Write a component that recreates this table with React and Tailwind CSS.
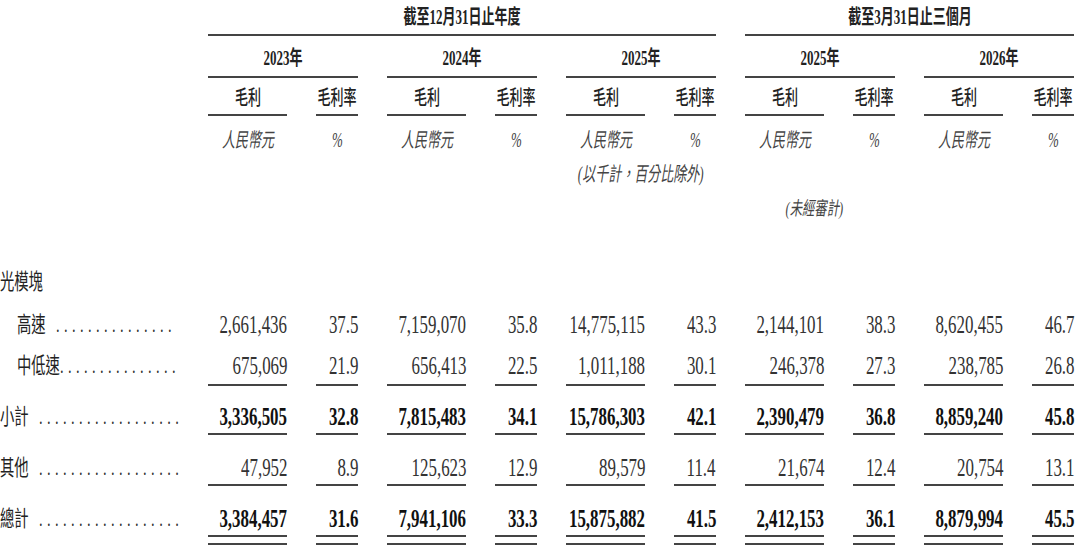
import React from 'react';

const GRID = 'grid grid-cols-[179px_repeat(5,79px_42px)] gap-x-[29px]';

// condensed text: the source table is squeezed horizontally
function T({ className = '', children }) {
  return (
    <span className={`inline-block whitespace-nowrap leading-none scale-x-[0.65] ${className}`}>
      {children}
    </span>
  );
}

const rows = [
  {
    label: '高速',
    gap: true,
    dots: 15,
    vals: ['2,661,436', '37.5', '7,159,070', '35.8', '14,775,115', '43.3', '2,144,101', '38.3', '8,620,455', '46.7'],
  },
  {
    label: '中低速',
    gap: false,
    dots: 15,
    vals: ['675,069', '21.9', '656,413', '22.5', '1,011,188', '30.1', '246,378', '27.3', '238,785', '26.8'],
  },
  {
    label: '小計',
    gap: true,
    dots: 18,
    bold: true,
    vals: ['3,336,505', '32.8', '7,815,483', '34.1', '15,786,303', '42.1', '2,390,479', '36.8', '8,859,240', '45.8'],
  },
  {
    label: '其他',
    gap: true,
    dots: 18,
    vals: ['47,952', '8.9', '125,623', '12.9', '89,579', '11.4', '21,674', '12.4', '20,754', '13.1'],
  },
  {
    label: '總計',
    gap: true,
    dots: 18,
    bold: true,
    vals: ['3,384,457', '31.6', '7,941,106', '33.3', '15,875,882', '41.5', '2,412,153', '36.1', '8,879,994', '45.5'],
  },
];

function Label({ row, indent }) {
  return (
    <T className={`origin-left text-[22px] text-[#222] ${indent ? 'ml-[17px]' : ''}`}>
      {row.label}
      <span className={`tracking-[0.31em] text-[#333] ${row.gap ? 'ml-[16px]' : ''}`}>{'.'.repeat(row.dots)}</span>
    </T>
  );
}

function Value({ v, bold }) {
  return (
    <T className={`origin-right text-[26px] ${bold ? 'font-bold text-[#111]' : 'text-[#333]'}`}>{v}</T>
  );
}

function PlainRow({ row, indent, className }) {
  return (
    <div className={`${GRID} ${className}`}>
      <div className="flex items-center">
        <Label row={row} indent={indent} />
      </div>
      {row.vals.map((v, i) => (
        <div key={i} className="flex items-center justify-end">
          <Value v={v} bold={row.bold} />
        </div>
      ))}
    </div>
  );
}

function LinedRow({ row, indent, className }) {
  return (
    <div className={`${GRID} ${className}`}>
      <div className="flex items-center border-b-2 border-transparent">
        <Label row={row} indent={indent} />
      </div>
      {row.vals.map((v, i) => (
        <div key={i} className="flex items-center justify-end border-b-2 border-[#444]">
          <Value v={v} bold={row.bold} />
        </div>
      ))}
    </div>
  );
}

function TotalRow({ row }) {
  return (
    <div className={`${GRID} pt-[16px]`}>
      <div className="flex h-[35px] items-center border-b-2 border-transparent">
        <Label row={row} />
      </div>
      {row.vals.map((v, i) => (
        <div key={i} className="flex flex-col">
          <div className="flex h-[35px] items-center justify-end border-b-2 border-[#444]">
            <Value v={v} bold={row.bold} />
          </div>
          <div className="mt-[6px] h-[2px] bg-[#444]" />
        </div>
      ))}
    </div>
  );
}

const years = ['2023年', '2024年', '2025年', '2025年', '2026年'];

export default function App() {
  return (
    <div className="h-[548px] w-[1080px] overflow-hidden bg-white font-['Liberation_Serif','Noto_Sans_CJK_TC',serif] text-[#222]">
      {/* period headers */}
      <div className={`${GRID} h-[36px]`}>
        <div />
        <div className="col-span-6 flex items-center justify-center border-b-2 border-[#444]">
          <T className="text-[20px] font-bold">截至12月31日止年度</T>
        </div>
        <div className="col-span-4 flex items-center justify-center border-b-2 border-[#444]">
          <T className="text-[20px] font-bold">截至3月31日止三個月</T>
        </div>
      </div>

      {/* years */}
      <div className={`${GRID} mt-[4px] h-[38px]`}>
        <div />
        {years.map((y, i) => (
          <div key={i} className="col-span-2 flex items-center justify-center border-b-2 border-[#444]">
            <T className="text-[20px] font-bold">{y}</T>
          </div>
        ))}
      </div>

      {/* column titles */}
      <div className={`${GRID} mt-[4px] h-[34px]`}>
        <div />
        {years.map((y, i) => (
          <React.Fragment key={i}>
            <div className="flex items-center justify-center border-b-2 border-[#444]">
              <T className="text-[20px] font-medium">毛利</T>
            </div>
            <div className="flex items-center justify-center border-b-2 border-[#444]">
              <T className="text-[20px] font-medium">毛利率</T>
            </div>
          </React.Fragment>
        ))}
      </div>

      {/* units */}
      <div className={`${GRID} h-[48px]`}>
        <div />
        {years.map((y, i) => (
          <React.Fragment key={i}>
            <div className="flex items-center justify-center">
              <T className="text-[20px] italic text-[#444]">人民幣元</T>
            </div>
            <div className="flex items-center justify-center">
              <T className="text-[20px] italic text-[#444]">%</T>
            </div>
          </React.Fragment>
        ))}
      </div>

      <div className={`${GRID} h-[18px]`}>
        <div className="col-start-6 col-span-2 flex items-center justify-center">
          <T className="text-[20px] italic text-[#444]">(以千計，百分比除外)</T>
        </div>
      </div>

      <div className={`${GRID} h-[52px]`}>
        <div className="col-start-8 col-span-2 flex items-center justify-center pr-[12px]">
          <T className="text-[19px] italic text-[#444]">(未經審計)</T>
        </div>
      </div>

      {/* body */}
      <div className={`${GRID} mt-[28px] h-[40px]`}>
        <div className="flex items-center">
          <T className="origin-left text-[22px] text-[#222]">光模塊</T>
        </div>
      </div>

      <PlainRow row={rows[0]} indent className="h-[46px]" />
      <LinedRow row={rows[1]} indent className="h-[38px]" />
      <LinedRow row={rows[2]} className="h-[49px] pt-[14px]" />
      <LinedRow row={rows[3]} className="h-[51px] pt-[16px]" />
      <TotalRow row={rows[4]} />
    </div>
  );
}
